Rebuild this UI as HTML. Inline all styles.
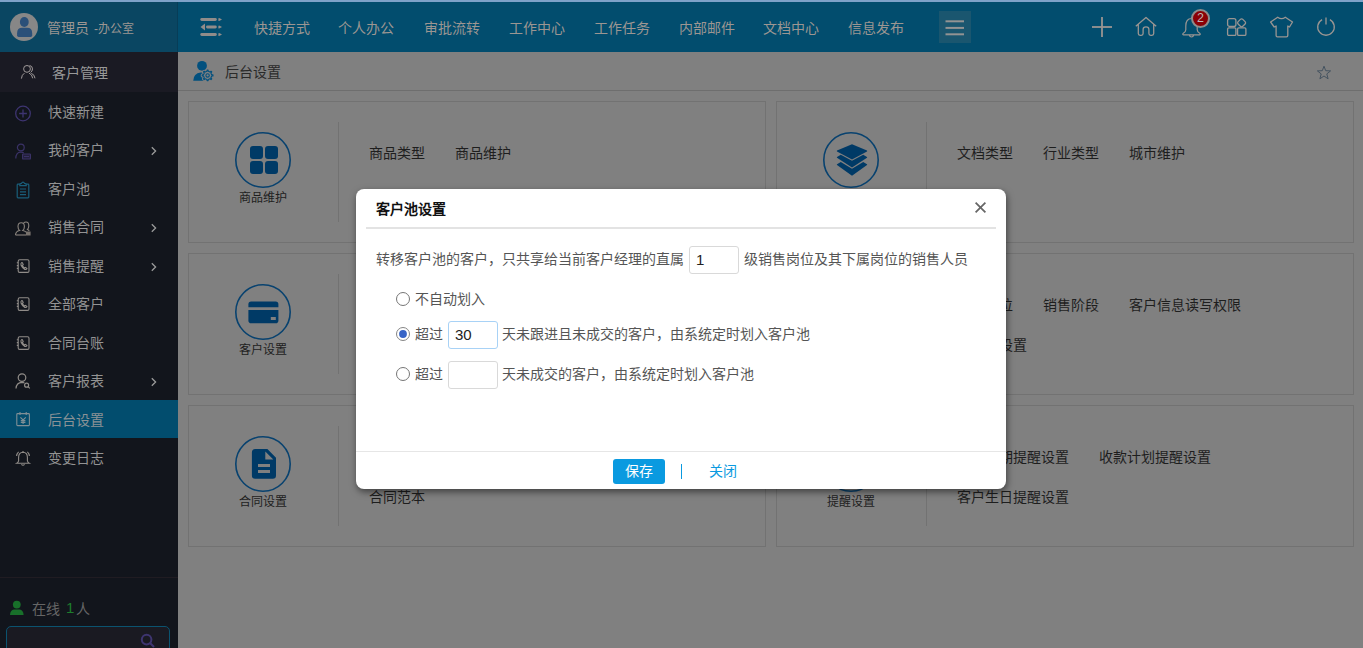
<!DOCTYPE html>
<html lang="zh-CN">
<head>
<meta charset="utf-8">
<style>
*{margin:0;padding:0;box-sizing:border-box}
html,body{width:1363px;height:648px;overflow:hidden;background:#808080;font-family:"Liberation Sans",sans-serif;font-size:14px}
.abs{position:absolute}
svg{position:absolute;overflow:visible}
#topline{position:absolute;left:0;top:0;width:1363px;height:2px;background:#7ea2c9}
#topL{position:absolute;left:0;top:2px;width:177px;height:50px;background:#0a4662}
#topSep{position:absolute;left:177px;top:2px;width:1px;height:50px;background:#073d57}
#topR{position:absolute;left:178px;top:2px;width:1185px;height:50px;background:#024d6e}
.tt{position:absolute;color:#9c9692;font-size:14px;line-height:20px;white-space:nowrap}
#side{position:absolute;left:0;top:52px;width:178px;height:596px;background:#12151c}
#sideHead{position:absolute;left:0;top:52px;width:178px;height:40px;background:#1a1a23}
.st{position:absolute;left:48px;line-height:20px;color:#939393;white-space:nowrap}
.ct{position:absolute;color:#1e1e1e;line-height:20px;white-space:nowrap}
.card{position:absolute;border:1px solid #727272}
.circ{position:absolute;width:56px;height:56px;border-radius:50%;border:1.5px solid #0a4877}
.lbl{position:absolute;font-size:12px;line-height:16px;color:#1e1e1e;white-space:nowrap;text-align:center;width:80px}
.sep{position:absolute;width:1px;background:#727272}
#modal{position:absolute;left:356px;top:189px;width:650px;height:300px;background:#fff;border-radius:8px;box-shadow:1px 3px 7px rgba(0,0,0,.5)}
.mt{position:absolute;color:#555;line-height:20px;white-space:nowrap}
.inp{position:absolute;width:50px;height:28px;border:1px solid #d9d9d9;border-radius:3px;background:#fff;font-size:15px;line-height:26px;padding-left:6px;color:#222}
.radio{position:absolute;width:14px;height:14px;border-radius:50%;border:1px solid #767676;background:#fff}
</style>
</head>
<body>
<div id="topline"></div>
<div id="topL"></div>
<div id="topSep"></div>
<div id="topR"></div>

<!-- avatar -->
<div class="abs" style="left:10px;top:13px;width:28px;height:28px;border-radius:50%;background:#878787"></div>
<svg style="left:10px;top:13px" width="28" height="28" viewBox="0 0 28 28">
<ellipse cx="14.3" cy="9" rx="4.4" ry="5" fill="#2b5079"/>
<path d="M7.1 22.3 L7.1 20.2 Q7.1 14.8 12.3 14.8 L17 14.8 Q22.2 14.8 22.2 20.2 L22.2 22.3 Q22.2 23.9 20.6 23.9 L8.7 23.9 Q7.1 23.9 7.1 22.3 Z" fill="#2b5079"/>
</svg>
<div class="tt" style="left:47px;top:18px">管理员 <span style="font-size:12px;margin-left:1px">-办公室</span></div>

<!-- hamburger left -->
<svg style="left:198px;top:15px" width="26" height="24" viewBox="0 0 26 24">
<g stroke="#908c8a" stroke-width="2.8" stroke-linecap="round">
<line x1="3.7" y1="4.5" x2="17.4" y2="4.5"/>
<line x1="9.4" y1="12" x2="17.4" y2="12"/>
<line x1="3.7" y1="19.5" x2="17.4" y2="19.5"/>
</g>
<g fill="#908c8a">
<path d="M20.4 3.6 Q20.4 2.9 21.1 2.9 L23.6 4.2 Q24 4.5 23.6 4.8 L21.1 6.1 Q20.4 6.1 20.4 5.4Z"/><path d="M20.4 11.1 Q20.4 10.4 21.1 10.4 L23.6 11.7 Q24 12 23.6 12.3 L21.1 13.6 Q20.4 13.6 20.4 12.9Z"/><path d="M20.4 18.6 Q20.4 17.9 21.1 17.9 L23.6 19.2 Q24 19.5 23.6 19.8 L21.1 21.1 Q20.4 21.1 20.4 20.4Z"/>
<path d="M2.5 12 L7 8.6 L7 15.4Z"/>
</g>
</svg>

<div class="tt" style="left:254px;top:18px">快捷方式</div>
<div class="tt" style="left:338px;top:18px">个人办公</div>
<div class="tt" style="left:424px;top:18px">审批流转</div>
<div class="tt" style="left:509px;top:18px">工作中心</div>
<div class="tt" style="left:594px;top:18px">工作任务</div>
<div class="tt" style="left:679px;top:18px">内部邮件</div>
<div class="tt" style="left:763px;top:18px">文档中心</div>
<div class="tt" style="left:848px;top:18px">信息发布</div>

<!-- hamburger right -->
<div class="abs" style="left:939px;top:11px;width:32px;height:32px;background:#1a566f"></div>
<svg style="left:939px;top:11px" width="32" height="32" viewBox="0 0 32 32">
<g stroke="#939393" stroke-width="2"><line x1="6.5" y1="10.3" x2="25" y2="10.3"/><line x1="6.5" y1="16.9" x2="25" y2="16.9"/><line x1="6.5" y1="23.3" x2="25" y2="23.3"/></g>
</svg>

<!-- right icons -->
<svg style="left:1090px;top:15px" width="24" height="24" viewBox="0 0 24 24">
<g stroke="#9a9592" stroke-width="1.8"><line x1="2" y1="12" x2="22" y2="12"/><line x1="12" y1="2" x2="12" y2="22"/></g>
</svg>
<svg style="left:1134px;top:15px" width="24" height="24" viewBox="0 0 24 24">
<path d="M1.8 11.2 L12 2.4 L22.2 11.2 M4.3 9.2 L4.3 18.6 Q4.3 20.4 6.1 20.4 L7.3 20.4 Q9.1 20.4 9.1 18.6 L9.1 14.4 Q9.1 11.8 12 11.8 Q14.9 11.8 14.9 14.4 L14.9 18.6 Q14.9 20.4 16.7 20.4 L17.9 20.4 Q19.7 20.4 19.7 18.6 L19.7 9.2" fill="none" stroke="#9a9592" stroke-width="1.3" stroke-linejoin="round"/>
</svg>
<svg style="left:1180px;top:14px" width="24" height="24" viewBox="0 0 24 24">
<path d="M11.5 4.5 C7 4.5 5.8 8.5 5.8 12 L5.8 15.8 Q5.8 18 3 19.5 Q2.2 20.5 3.5 20.8 L19.5 20.8 Q20.8 20.5 20 19.5 Q17.2 18 17.2 15.8 L17.2 12 C17.2 8.5 16 4.5 11.5 4.5 Z M9.3 21 Q9.8 23 11.5 23 Q13.2 23 13.7 21 M11.5 4.5 L11.5 3.2" fill="none" stroke="#9a9592" stroke-width="1.2" stroke-linejoin="round"/>
</svg>
<div class="abs" style="left:1191px;top:9px;width:19px;height:19px;border-radius:50%;background:#8a0006;border:2px solid #8d8d8d;color:#bdb5b5;font-size:12.5px;line-height:15px;text-align:center">2</div>
<svg style="left:1225px;top:16px" width="24" height="24" viewBox="0 0 24 24">
<g fill="none" stroke="#9a9592" stroke-width="1.3">
<rect x="2.6" y="2.6" width="8.3" height="7.9" rx="2"/>
<rect x="-3.3" y="-3.3" width="6.6" height="6.6" rx="1.7" transform="translate(16.6 6.8) rotate(45)"/>
<rect x="2.6" y="11.8" width="8.3" height="7.6" rx="1.2"/>
<rect x="12.6" y="11.8" width="8.3" height="7.6" rx="1.2"/>
</g>
</svg>
<svg style="left:1269px;top:15px" width="26" height="24" viewBox="0 0 26 24">
<path d="M8.7 2.2 Q12.5 5 16.3 2.2 L23.5 7 L20.5 12 L18.8 11 L18.8 20.6 Q18.8 21.9 17.5 21.9 L8.4 21.9 Q7.1 21.9 7.1 20.6 L7.1 11 L5.2 12 L1.6 7 Z" fill="none" stroke="#9a9592" stroke-width="1.3" stroke-linejoin="round"/>
</svg>
<svg style="left:1314px;top:15px" width="24" height="24" viewBox="0 0 24 24">
<path d="M8.1 4.6 A8.3 8.3 0 1 0 15.9 4.6" fill="none" stroke="#9a9592" stroke-width="1.3"/>
<line x1="12" y1="2.6" x2="12" y2="9.6" stroke="#9a9592" stroke-width="1.3"/>
</svg>

<!-- sidebar -->
<div id="side"></div>
<div id="sideHead"></div>
<svg style="left:19px;top:63px" width="18" height="18" viewBox="0 0 18 18">
<g fill="none" stroke="#a09a9a" stroke-width="1">
<circle cx="8" cy="5.9" r="3.4"/>
<path d="M2.4 15.6 Q2.8 11.6 5.4 10.2"/>
<path d="M10 10.1 Q13.2 11.4 13.7 15.3"/>
<path d="M10.6 2.5 Q13.4 2.9 13.5 5.9 Q13.4 8.4 11.5 9.5"/>
<path d="M12.3 10.3 Q15.6 11.6 16 15.3"/>
</g>
</svg>
<div class="st" style="left:52px;top:63px;color:#999">客户管理</div>

<div class="st" style="top:102px">快速新建</div>
<div class="st" style="top:140px">我的客户</div>
<div class="st" style="top:179px">客户池</div>
<div class="st" style="top:217px">销售合同</div>
<div class="st" style="top:256px">销售提醒</div>
<div class="st" style="top:294px">全部客户</div>
<div class="st" style="top:333px">合同台账</div>
<div class="st" style="top:371px">客户报表</div>
<div class="abs" style="left:0;top:400px;width:178px;height:38px;background:#024d6e"></div>
<div class="st" style="top:410px;color:#8a9296">后台设置</div>
<div class="st" style="top:448px">变更日志</div>

<!-- arrows -->
<svg style="left:150px;top:146px" width="8" height="10" viewBox="0 0 8 10"><path d="M1.8 1.2 L5.6 5 L1.8 8.8" fill="none" stroke="#9a9a9a" stroke-width="1.3"/></svg>
<svg style="left:150px;top:223px" width="8" height="10" viewBox="0 0 8 10"><path d="M1.8 1.2 L5.6 5 L1.8 8.8" fill="none" stroke="#9a9a9a" stroke-width="1.3"/></svg>
<svg style="left:150px;top:262px" width="8" height="10" viewBox="0 0 8 10"><path d="M1.8 1.2 L5.6 5 L1.8 8.8" fill="none" stroke="#9a9a9a" stroke-width="1.3"/></svg>
<svg style="left:150px;top:377px" width="8" height="10" viewBox="0 0 8 10"><path d="M1.8 1.2 L5.6 5 L1.8 8.8" fill="none" stroke="#9a9a9a" stroke-width="1.3"/></svg>

<!-- side icons -->
<svg style="left:14px;top:105px" width="18" height="18" viewBox="0 0 18 18">
<circle cx="9" cy="8.5" r="7.3" fill="none" stroke="#3d3470" stroke-width="1.3"/>
<path d="M9 4.6 V12.4 M5.1 8.5 H12.9" stroke="#3d3470" stroke-width="1.3"/>
</svg>
<svg style="left:14px;top:142px" width="18" height="18" viewBox="0 0 18 18">
<g fill="none" stroke="#3a3266" stroke-width="1.2">
<circle cx="6.8" cy="5.5" r="3.4"/>
<path d="M1.8 16.5 Q1.8 10.2 6.8 10.2 Q8.6 10.2 9.8 11"/>
<rect x="8.6" y="12" width="7.8" height="5" rx="0.6" fill="#221f38"/><path d="M10 14.5 H15"/>
</g>
</svg>
<svg style="left:14px;top:181px" width="18" height="18" viewBox="0 0 18 18">
<g fill="none" stroke="#1a5e7a" stroke-width="1.2">
<path d="M5.8 3.2 L4 3.2 Q3.2 3.2 3.2 4 L3.2 16 Q3.2 16.8 4 16.8 L14 16.8 Q14.8 16.8 14.8 16 L14.8 4 Q14.8 3.2 14 3.2 L12.2 3.2"/>
<path d="M5.8 4.6 L5.8 3 Q6.6 2.6 7.4 2.4 Q8 1.2 9 1.2 Q10 1.2 10.6 2.4 Q11.4 2.6 12.2 3 L12.2 4.6 Z"/>
<path d="M6 8 H12 M6 10.8 H12 M6 13.6 H12"/>
</g>
</svg>
<svg style="left:14px;top:220px" width="18" height="18" viewBox="0 0 18 18">
<g fill="none" stroke="#8a847e" stroke-width="1.1">
<path d="M1.5 15 Q1.8 11.2 5.6 10.5 Q4 9.2 4 6.5 Q4 2.8 7.2 2.8 Q10.4 2.8 10.4 6.5 Q10.4 9.2 8.8 10.5 Q11 10.9 12 12.2"/>
<path d="M9.6 3.2 Q10.6 2 12 2 Q14.8 2 14.8 5.8 Q14.8 8.2 13.4 9.6 Q14.6 10 15.2 10.8"/>
<path d="M1.5 15 L12 15"/>
</g>
<rect x="12" y="11.5" width="4.6" height="4" fill="#77716c"/>
</svg>
<!-- phonebook icons -->
<svg style="left:14px;top:257px" width="18" height="18" viewBox="0 0 18 18">
<g fill="none" stroke="#908c88" stroke-width="1.1">
<rect x="4.2" y="2.8" width="10.8" height="12.6" rx="1.4"/>
<path d="M2.8 5.8 H4.2 M2.8 8.6 H4.2 M2.8 11.4 H4.2"/>
<path d="M7.6 5.6 Q6.4 6.4 7.2 8.6 Q8.4 11.2 10.8 12.4 Q12.4 12.8 13 11.6 L11.6 10.4 L10.6 11 Q9 10 8.4 8.4 L9.2 7.6 L8.4 5.8 Z"/>
</g>
</svg>
<svg style="left:14px;top:295px" width="18" height="18" viewBox="0 0 18 18">
<g fill="none" stroke="#908c88" stroke-width="1.1">
<rect x="4.2" y="2.8" width="10.8" height="12.6" rx="1.4"/>
<path d="M2.8 5.8 H4.2 M2.8 8.6 H4.2 M2.8 11.4 H4.2"/>
<path d="M7.6 5.6 Q6.4 6.4 7.2 8.6 Q8.4 11.2 10.8 12.4 Q12.4 12.8 13 11.6 L11.6 10.4 L10.6 11 Q9 10 8.4 8.4 L9.2 7.6 L8.4 5.8 Z"/>
</g>
</svg>
<svg style="left:14px;top:334px" width="18" height="18" viewBox="0 0 18 18">
<g fill="none" stroke="#908c88" stroke-width="1.1">
<rect x="4.2" y="2.8" width="10.8" height="12.6" rx="1.4"/>
<path d="M2.8 5.8 H4.2 M2.8 8.6 H4.2 M2.8 11.4 H4.2"/>
<path d="M7.6 5.6 Q6.4 6.4 7.2 8.6 Q8.4 11.2 10.8 12.4 Q12.4 12.8 13 11.6 L11.6 10.4 L10.6 11 Q9 10 8.4 8.4 L9.2 7.6 L8.4 5.8 Z"/>
</g>
</svg>
<svg style="left:14px;top:372px" width="18" height="18" viewBox="0 0 18 18">
<g fill="none" stroke="#908c88" stroke-width="1.2">
<circle cx="8" cy="5.6" r="3.8"/>
<path d="M2 16.5 Q2.4 10.6 8 10.4 Q9.4 10.4 10.4 10.8"/>
<circle cx="12.6" cy="13.2" r="2"/>
<path d="M14 14.6 L15.8 16.4"/>
</g>
</svg>
<svg style="left:14px;top:410px" width="18" height="18" viewBox="0 0 18 18">
<g fill="none" stroke="#7f8f96" stroke-width="1.1">
<rect x="2.8" y="3.6" width="12.6" height="12" rx="0.8"/>
<path d="M6 2 V5 M12.2 2 V5"/>
<path d="M6.4 7.4 L9.1 10 L11.8 7.4 M9.1 10 V14 M6.8 10.6 H11.4 M6.8 12.4 H11.4"/>
</g>
</svg>
<svg style="left:14px;top:449px" width="18" height="18" viewBox="0 0 18 18">
<g fill="none" stroke="#908c88" stroke-width="1.1">
<path d="M9 3.2 Q4.6 3.4 4.6 8.4 L4.6 11.8 Q4.2 13.4 2.8 14.2 L15.2 14.2 Q13.8 13.4 13.4 11.8 L13.4 8.4 Q13.4 3.4 9 3.2 Z"/>
<path d="M7.4 15.4 Q9 17 10.6 15.4 M9 3.2 V2"/>
<path d="M2.6 7 Q2.8 4.4 4.6 2.8 M15.4 7 Q15.2 4.4 13.4 2.8"/>
</g>
</svg>

<!-- sidebar bottom -->
<div class="abs" style="left:0;top:577px;width:178px;height:1px;background:#201c22"></div>
<svg style="left:9px;top:600px" width="16" height="16" viewBox="0 0 16 16">
<circle cx="7.8" cy="4.6" r="3.9" fill="#18702a"/>
<path d="M1 15 Q1.2 10.2 5 9.6 L10.6 9.6 Q14.4 10.2 14.6 15 Z" fill="#18702a"/>
</svg>
<div class="abs" style="left:32px;top:599px;line-height:20px;color:#666;white-space:nowrap">在线</div><div class="abs" style="left:66px;top:598px;line-height:20px;font-size:15px;color:#1d7d2c">1</div><div class="abs" style="left:76px;top:599px;line-height:20px;color:#666">人</div>
<div class="abs" style="left:6px;top:626px;width:164px;height:40px;border:1px solid #0b5370;border-radius:5px;background:#1a1a22"></div>
<svg style="left:139px;top:632px" width="18" height="18" viewBox="0 0 18 18">
<circle cx="7.6" cy="7.6" r="4.8" fill="none" stroke="#3e3570" stroke-width="2"/>
<path d="M11 11 L15 15" stroke="#3e3570" stroke-width="2.2"/>
</svg>

<!-- content header -->
<div class="abs" style="left:178px;top:90px;width:1185px;height:1px;background:#6e6e6e"></div>
<svg style="left:192px;top:60px" width="24" height="24" viewBox="0 0 24 24">
<circle cx="10" cy="5.8" r="4.9" fill="#02507e"/>
<path d="M1.2 20.8 Q1.6 13.4 8.6 12.6 L12 12.6 L12 20.8 Z" fill="#02507e"/>
<g transform="translate(15.6 15.4)">
<path d="M4.05 -0.64 L5.38 -0.51 L5.38 0.51 L4.05 0.64 L3.32 2.41 L4.16 3.44 L3.44 4.16 L2.41 3.32 L0.64 4.05 L0.51 5.38 L-0.51 5.38 L-0.64 4.05 L-2.41 3.32 L-3.44 4.16 L-4.16 3.44 L-3.32 2.41 L-4.05 0.64 L-5.38 0.51 L-5.38 -0.51 L-4.05 -0.64 L-3.32 -2.41 L-4.16 -3.44 L-3.44 -4.16 L-2.41 -3.32 L-0.64 -4.05 L-0.51 -5.38 L0.51 -5.38 L0.64 -4.05 L2.41 -3.32 L3.44 -4.16 L4.16 -3.44 L3.32 -2.41Z" fill="#808080" stroke="#808080" stroke-width="3" stroke-linejoin="round"/>
<path d="M4.05 -0.64 L5.38 -0.51 L5.38 0.51 L4.05 0.64 L3.32 2.41 L4.16 3.44 L3.44 4.16 L2.41 3.32 L0.64 4.05 L0.51 5.38 L-0.51 5.38 L-0.64 4.05 L-2.41 3.32 L-3.44 4.16 L-4.16 3.44 L-3.32 2.41 L-4.05 0.64 L-5.38 0.51 L-5.38 -0.51 L-4.05 -0.64 L-3.32 -2.41 L-4.16 -3.44 L-3.44 -4.16 L-2.41 -3.32 L-0.64 -4.05 L-0.51 -5.38 L0.51 -5.38 L0.64 -4.05 L2.41 -3.32 L3.44 -4.16 L4.16 -3.44 L3.32 -2.41Z" fill="#808080" stroke="#02507e" stroke-width="1.1" stroke-linejoin="round"/>
<circle r="1.7" fill="none" stroke="#02507e" stroke-width="1.1"/>
</g>
</svg>
<div class="ct" style="left:225px;top:62px;color:#2a2a2a">后台设置</div>
<svg style="left:1316px;top:65px" width="16" height="16" viewBox="0 0 16 16">
<path d="M8 1.2 L9.7 5.7 L14.6 5.9 L10.8 8.9 L12.1 13.8 L8 11 L3.9 13.8 L5.2 8.9 L1.4 5.9 L6.3 5.7 Z" fill="none" stroke="#41505e" stroke-width="0.95" stroke-linejoin="round"/>
</svg>

<!-- cards -->
<div class="card" style="left:188px;top:101px;width:578px;height:142px"></div>
<div class="card" style="left:776px;top:101px;width:578px;height:142px"></div>
<div class="card" style="left:188px;top:253px;width:578px;height:142px"></div>
<div class="card" style="left:776px;top:253px;width:578px;height:142px"></div>
<div class="card" style="left:188px;top:405px;width:578px;height:142px"></div>
<div class="card" style="left:776px;top:405px;width:578px;height:142px"></div>

<div class="sep" style="left:338px;top:122px;height:100px"></div>
<div class="sep" style="left:926px;top:122px;height:100px"></div>
<div class="sep" style="left:338px;top:274px;height:100px"></div>
<div class="sep" style="left:926px;top:274px;height:100px"></div>
<div class="sep" style="left:338px;top:426px;height:100px"></div>
<div class="sep" style="left:926px;top:426px;height:100px"></div>

<svg style="left:235px;top:132px" width="56" height="56" viewBox="0 0 56 56"><circle cx="28" cy="28" r="27.2" fill="none" stroke="#08426f" stroke-width="1.6"/></svg>
<svg style="left:823px;top:132px" width="56" height="56" viewBox="0 0 56 56"><circle cx="28" cy="28" r="27.2" fill="none" stroke="#08426f" stroke-width="1.6"/></svg>
<svg style="left:235px;top:284px" width="56" height="56" viewBox="0 0 56 56"><circle cx="28" cy="28" r="27.2" fill="none" stroke="#08426f" stroke-width="1.6"/></svg>
<svg style="left:823px;top:284px" width="56" height="56" viewBox="0 0 56 56"><circle cx="28" cy="28" r="27.2" fill="none" stroke="#08426f" stroke-width="1.6"/></svg>
<svg style="left:235px;top:436px" width="56" height="56" viewBox="0 0 56 56"><circle cx="28" cy="28" r="27.2" fill="none" stroke="#08426f" stroke-width="1.6"/></svg>
<svg style="left:823px;top:436px" width="56" height="56" viewBox="0 0 56 56"><circle cx="28" cy="28" r="27.2" fill="none" stroke="#08426f" stroke-width="1.6"/></svg>

<!-- grid icon -->
<svg style="left:249px;top:146px" width="30" height="30" viewBox="0 0 30 30">
<g fill="#003a66"><rect x="1" y="0" width="13" height="13" rx="3"/><rect x="16" y="0" width="13" height="13" rx="3"/><rect x="1" y="15" width="13" height="13" rx="3"/><rect x="16" y="15" width="13" height="13" rx="3"/></g>
</svg>
<!-- layers icon -->
<svg style="left:836px;top:143px" width="32" height="34" viewBox="0 0 32 34">
<g fill="#003a66">
<path d="M16 1.2 L31 7.6 Q31.4 8 31 8.4 L16 16.6 L1 8.4 Q0.6 8 1 7.6 Z"/>
<path d="M4.8 11.8 L16 17.8 L27.2 11.8 L31 14 Q31.4 14.4 31 14.8 L16 24.6 L1 14.8 Q0.6 14.4 1 14 Z"/>
<path d="M4.8 19 L16 25.8 L27.2 19 L31 21.2 Q31.4 21.6 31 22 L16 32.8 L1 22 Q0.6 21.6 1 21.2 Z"/>
</g>
</svg>
<!-- card icon -->
<svg style="left:248px;top:301px" width="32" height="24" viewBox="0 0 32 24">
<g fill="#003a66">
<path d="M0.4 6.2 L0.4 3.4 Q0.4 0.6 3.2 0.6 L27.6 0.6 Q30.4 0.6 30.4 3.4 L30.4 6.2 Z"/>
<path d="M0.4 9 L30.4 9 L30.4 19.4 Q30.4 22.2 27.6 22.2 L3.2 22.2 Q0.4 22.2 0.4 19.4 Z"/>
</g>
<rect x="22.8" y="16" width="5" height="3" fill="#808080"/>
</svg>
<!-- doc icon -->
<svg style="left:251px;top:449px" width="26" height="31" viewBox="0 0 26 31">
<path d="M0.9 3.4 Q0.9 -0.1 4.2 -0.1 L16.4 -0.1 L25 8.8 L25 26.6 Q25 29.8 21.8 29.8 L4.1 29.8 Q0.9 29.8 0.9 26.6 Z M14.3 2.4 L14.3 10.6 L22.3 10.6 Z M7 15.1 L19 15.1 L19 17.9 L7 17.9 Z M7 21.1 L19 21.1 L19 24 L7 24 Z" fill="#003a66" fill-rule="evenodd"/>
</svg>

<div class="lbl" style="left:223px;top:190px">商品维护</div>
<div class="lbl" style="left:223px;top:342px">客户设置</div>
<div class="lbl" style="left:223px;top:494px">合同设置</div>
<div class="lbl" style="left:811px;top:494px">提醒设置</div>

<div class="ct" style="left:369px;top:143px">商品类型</div>
<div class="ct" style="left:455px;top:143px">商品维护</div>
<div class="ct" style="left:957px;top:143px">文档类型</div>
<div class="ct" style="left:1043px;top:143px">行业类型</div>
<div class="ct" style="left:1129px;top:143px">城市维护</div>
<div class="ct" style="left:957px;top:295px">销售岗位</div>
<div class="ct" style="left:1043px;top:295px">销售阶段</div>
<div class="ct" style="left:1129px;top:295px">客户信息读写权限</div>
<div class="ct" style="left:957px;top:335px">客户池设置</div>
<div class="ct" style="left:957px;top:447px">合同到期提醒设置</div>
<div class="ct" style="left:1099px;top:447px">收款计划提醒设置</div>
<div class="ct" style="left:957px;top:487px">客户生日提醒设置</div>
<div class="ct" style="left:369px;top:487px">合同范本</div>

<!-- modal -->
<div id="modal">
  <div class="abs" style="left:20px;top:10px;line-height:20px;font-weight:bold;color:#111;white-space:nowrap">客户池设置</div>
  <svg style="left:618.5px;top:12.5px" width="11" height="11" viewBox="0 0 11 11"><path d="M0.6 0.6 L10.4 10.4 M10.4 0.6 L0.6 10.4" stroke="#666" stroke-width="1.75"/></svg>
  <div class="abs" style="left:10px;top:38px;width:630px;height:2px;background:#e3e3e3"></div>
  <div class="mt" style="left:20px;top:60px">转移客户池的客户，只共享给当前客户经理的直属</div>
  <div class="inp" style="left:333px;top:57px">1</div>
  <div class="mt" style="left:388px;top:60px">级销售岗位及其下属岗位的销售人员</div>

  <div class="radio" style="left:40px;top:103px"></div>
  <div class="mt" style="left:59px;top:100px">不自动划入</div>

  <div class="radio" style="left:40px;top:138px;border-color:#858585"></div>
  <svg style="left:40px;top:138px" width="14" height="14" viewBox="0 0 14 14"><circle cx="7" cy="7" r="3.9" fill="#3764c6"/></svg>
  <div class="mt" style="left:59px;top:135px">超过</div>
  <div class="inp" style="left:92px;top:132px;border-color:#a8d2f6">30</div>
  <div class="mt" style="left:146px;top:135px">天未跟进且未成交的客户，由系统定时划入客户池</div>

  <div class="radio" style="left:40px;top:178px"></div>
  <div class="mt" style="left:59px;top:175px">超过</div>
  <div class="inp" style="left:92px;top:172px"></div>
  <div class="mt" style="left:146px;top:175px">天未成交的客户，由系统定时划入客户池</div>

  <div class="abs" style="left:0;top:262px;width:650px;height:1px;background:#e6e6e6"></div>
  <div class="abs" style="left:257px;top:270px;width:52px;height:25px;background:#0a9ae0;border-radius:3px;color:#fff;text-align:center;line-height:25px">保存</div>
  <div class="abs" style="left:325px;top:275px;width:1px;height:15px;background:#0a9ae0"></div>
  <div class="abs" style="left:353px;top:272px;line-height:20px;color:#0a9ae0">关闭</div>
</div>
</body>
</html>
